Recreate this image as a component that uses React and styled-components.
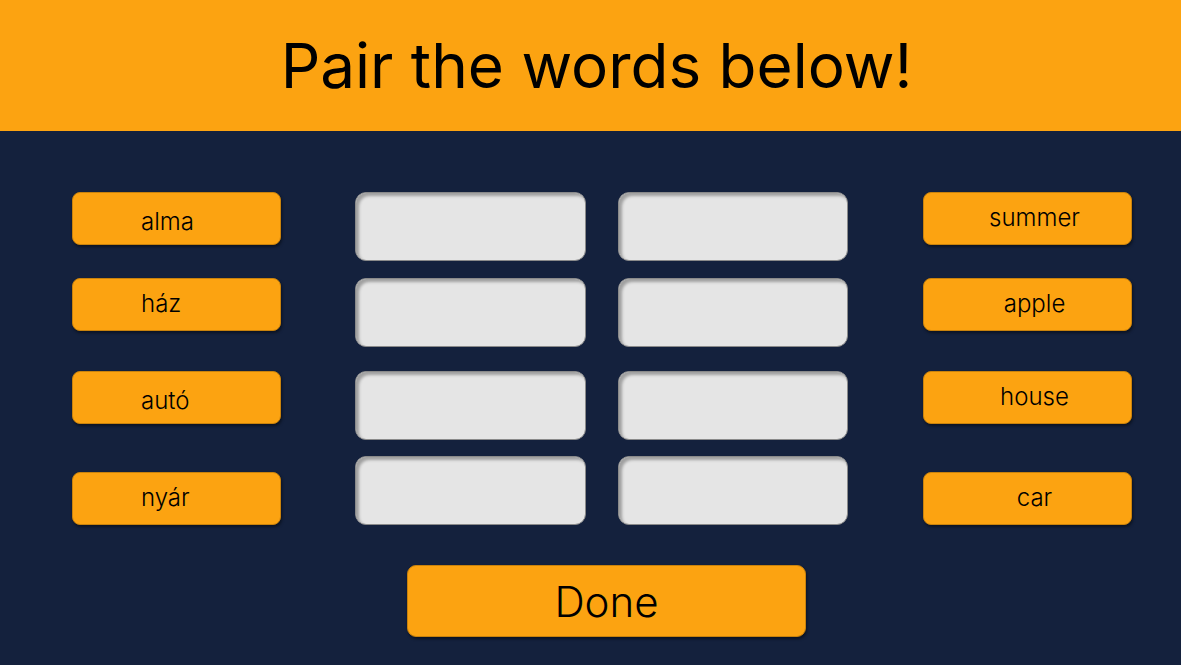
import React from 'react'
import styled, { createGlobalStyle } from 'styled-components'

const GlobalStyle = createGlobalStyle`
    html, body {
        margin: 0;
        padding: 0;
        background-color: #14213d;
        font-family: Inter, "Noto Sans", sans-serif;
    }
`

const Page = styled.div`
    width: 1181px;
    height: 665px;
    background-color: #14213d;
    overflow: hidden;
`

const Header = styled.header`
    height: 131px;
    background-color: #fca311;
    display: flex;
    align-items: center;
    justify-content: center;
    padding-left: 12px;
`

const Title = styled.h1`
    margin: 0;
    font-size: 62px;
    font-weight: 400;
    color: #000;
`

const Board = styled.main`
    display: flex;
    padding: 61px 0 0 72px;
`

const Column = styled.div`
    display: grid;
    grid-template-rows: 86px 93px 85px 69px;
    margin-left: ${(p) => p.$gap || 0}px;
`

const Slots = styled.div`
    display: grid;
    grid-template-columns: 231px 230px;
    grid-template-rows: 86px 93px 85px 69px;
    column-gap: 32px;
    margin-left: 74px;
`

const Word = styled.button`
    width: 209px;
    height: 53px;
    box-sizing: border-box;
    align-self: ${(p) => (p.$low ? 'end' : 'start')};
    border: 1px solid #c9820c;
    border-radius: 8px;
    background-color: #fca311;
    box-shadow: 1px 2px 3px rgba(0, 0, 0, 0.45);
    font-family: Inter, sans-serif;
    font-size: 24px;
    font-weight: 300;
    color: #000;
    text-align: ${(p) => (p.$left ? 'left' : 'center')};
    padding: ${(p) => (p.$nudge ? 6 : 0)}px 0 ${(p) => (p.$nudge ? 0 : 3)}px ${(p) => (p.$left ? 68 : 14)}px;
    cursor: pointer;
`

const Slot = styled.div`
    height: 69px;
    box-sizing: border-box;
    background-color: #e5e5e5;
    border-radius: 11px;
    border: 1px solid #8a8a8a;
    box-shadow: inset 3px 3px 3px rgba(0, 0, 0, 0.3);
`

const Footer = styled.footer`
    padding: 40px 0 0 407px;
`

const DoneButton = styled.button`
    width: 399px;
    height: 72px;
    border: 1px solid #c9820c;
    border-radius: 9px;
    background-color: #fca311;
    box-shadow: 1px 2px 3px rgba(0, 0, 0, 0.45);
    font-family: Inter, sans-serif;
    font-size: 42px;
    font-weight: 300;
    color: #000;
    cursor: pointer;
`

const hungarian = [
    { text: 'alma', nudge: true },
    { text: 'ház' },
    { text: 'autó', nudge: true },
    { text: 'nyár', low: true },
]

const english = [
    { text: 'summer' },
    { text: 'apple' },
    { text: 'house' },
    { text: 'car', low: true },
]

export default function App() {
    return (
        <Page>
            <GlobalStyle />
            <Header>
                <Title>Pair the words below!</Title>
            </Header>
            <Board>
                <Column>
                    {hungarian.map((w) => (
                        <Word key={w.text} $left $nudge={w.nudge} $low={w.low}>{w.text}</Word>
                    ))}
                </Column>
                <Slots>
                    {[0, 1, 2, 3, 4, 5, 6, 7].map((i) => (
                        <Slot key={i} />
                    ))}
                </Slots>
                <Column $gap={75}>
                    {english.map((w) => (
                        <Word key={w.text} $low={w.low}>{w.text}</Word>
                    ))}
                </Column>
            </Board>
            <Footer>
                <DoneButton>Done</DoneButton>
            </Footer>
        </Page>
    )
}
